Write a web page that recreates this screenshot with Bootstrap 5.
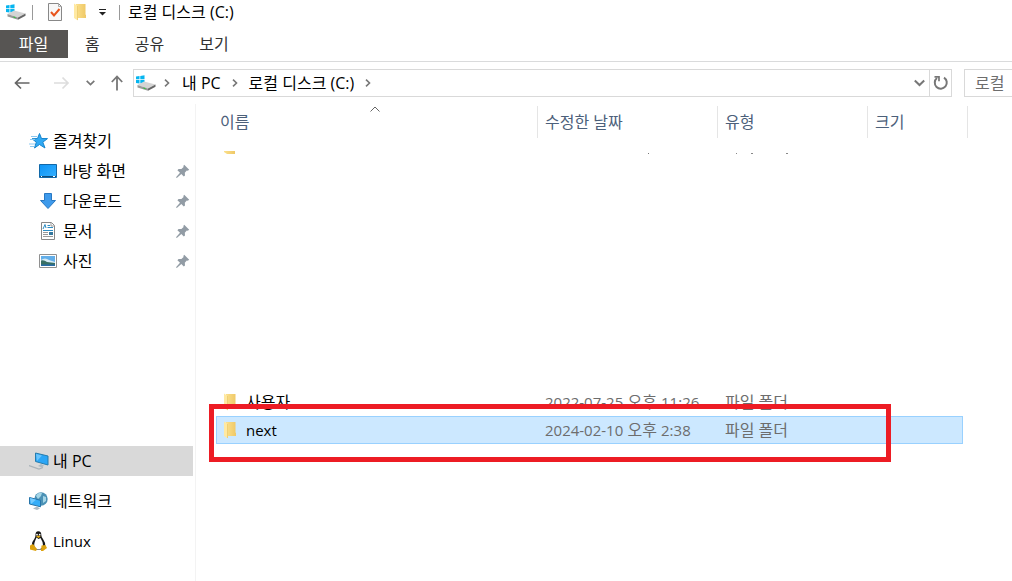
<!DOCTYPE html>
<html lang="ko">
<head>
<meta charset="utf-8">
<meta name="viewport" content="width=device-width, initial-scale=1">
<title>로컬 디스크 (C:)</title>
<link href="https://cdn.jsdelivr.net/npm/bootstrap@5.3.0/dist/css/bootstrap.min.css" rel="stylesheet">
<style>
body{font-family:"Open Sans","Noto Sans CJK KR",sans-serif;font-size:16px;line-height:20px;color:#000;background:#fff;overflow:hidden}
.ltn{font-size:15px}
svg{display:block;flex:none}
button,a{color:inherit;text-decoration:none}
.plain{border:0;background:none;padding:0}
.titlebar{height:30px;padding:0 0 6px 6px}
.rule{width:1px;height:15px;background:#999;margin:0 8px 0 12px}
.rule.tight{margin:0 15px 0 6px}
.tabs{height:32px;border-bottom:1px solid #dadbdc;color:#333}
.tabs button{height:28px;padding:0 18px 0 17px}
.tabs .tab-file{width:68px;background:#575553;color:#fff}
.address{padding:7px 0 7px 14px}
.crumbs{height:28px;border:1px solid #d9d9d9;min-width:0;padding-left:2px;margin:0 12px 0 10px}
.reload{width:22px;height:26px;border-left:1px solid #d9d9d9}
.search{width:48px;height:28px;border:1px solid #d9d9d9;border-right:0;border-radius:0;padding:0 6px 0 10px;color:#6d6d6d;outline:0}
.search::placeholder{color:#6d6d6d}
.side{width:196px;border-right:1px solid #f3f3f3;min-height:calc(100vh - 104px);padding-top:22px}
.side a{height:30px;width:193px;padding-left:29px}
.side a.sub{padding:0 3px 0 39px}
.side a.sub span{padding-left:6px}
.side a.here{background:#d9d9d9;margin-top:170px}
.side a.far{margin-top:10px}
.listing{padding:2px 44px 0 20px}
.files{width:100%;table-layout:fixed;border-collapse:separate;border-spacing:0;color:#6d6d6d}
.files th{height:32px;padding:0 0 0 7px;font-weight:400;color:#4c607a;border-right:1px solid #e5e5e5}
.files th:first-child{padding-left:4px}
.files td{height:28px;padding:0 0 0 7px;white-space:nowrap}
.files td:first-child{padding-left:8px;color:#000}
.fname{padding-left:10px}
.c-date{width:180px}.c-type{width:150px}.c-size{width:95px}.c-end{width:5px}
.picked td{background:#cce8ff;border:solid #99d1ff;border-width:1px 0}
.files .picked td:first-child{border-left-width:1px;padding-left:7px}
.picked td.last{border-right-width:1px}
.files .peek td{height:16px;vertical-align:bottom}
.files .blank td{height:234px}
.sort{top:2px;left:150px}
.marker{left:13px;right:121px;top:300px;height:58px;border:5px solid #ed1c24;pointer-events:none}
</style>
</head>
<body>
<svg width="0" height="0" class="position-absolute" aria-hidden="true">
<defs>
<linearGradient id="gold" x2="1"><stop stop-color="#fbe08c"/><stop offset="1" stop-color="#efc866"/></linearGradient>
<linearGradient id="sky" x2="1" y2="1"><stop stop-color="#0c93f5"/><stop offset="1" stop-color="#35b0ff"/></linearGradient>
<symbol id="drive" viewBox="0 0 20 16"><path d="M0 1.5 3.500 1v3.300H0zM4.300.9 8.500.2v4.100H4.300zM0 5.100h3.500v3.300L0 7.900zM4.300 5.100h4.200v4L4.300 8.500z" fill="#05b5f0"/><path d="M1.500 10 8 6.500l11.500 3-7.500 4z" fill="#d4d4d4"/><path d="m1.500 10 10.500 3.500v2.300L1.500 12.500z" fill="#999"/><path d="m12 13.500 7.500-4v2.300l-7.500 4z" fill="#666"/><path d="m7.500 13 2 .6" stroke="#31c33a" stroke-width="1.200"/></symbol>
<symbol id="folder" viewBox="0 0 12 18"><path d="M2 1h9.500v10.500l.5.500v3H2z" fill="url(#gold)"/><path d="M0 .5 3.800 3v14.500L0 15z" fill="#ffe9a2"/><path d="M3.500 3v14" stroke="#e8c565" stroke-width=".7"/></symbol>
<symbol id="pin" viewBox="0 0 14 14"><path d="m8.200.8 5 5-1.400 1-1-.3-2 2.200.2 2.700-1.200 1.200-2.500-2.600L.8 14 0 13.200 4 8.700 1.400 6.200l1.200-1.200 2.800.1 2.200-2L7.300 2z" fill="#929ca5"/></symbol>
<symbol id="chev" viewBox="0 0 6 8"><path d="m1 .7 3.500 3.300L1 7.300" fill="none" stroke="#777" stroke-width="1.600"/></symbol>
</defs>
</svg>

<header>
<div class="titlebar d-flex align-items-center">
 <svg width="20" height="16"><use href="#drive"/></svg>
 <span class="rule tight"></span>
 <button class="plain" aria-label="속성"><svg width="14" height="18" viewBox="0 0 14 18"><path d="M.5.500h10l3 3v14H.5z" fill="#f8f8f8" stroke="#888"/><path d="M10.500.500v3h3" fill="none" stroke="#aaa"/><path d="m3 9 3 3.500L11.500 6" fill="none" stroke="#e8541c" stroke-width="2"/></svg></button>
 <button class="plain ms-2 ps-1" aria-label="새 폴더"><svg width="12" height="18"><use href="#folder"/></svg></button>
 <button class="plain ms-2 ps-1" aria-label="사용자 지정"><svg width="9" height="8" viewBox="0 0 9 8"><path d="M1 1.500h7" stroke="#222"/><path d="M1 4h7L4.500 7.500z" fill="#222"/></svg></button>
 <span class="rule"></span>
 <span>로컬 디스크 (C:)</span>
</div>
<nav class="tabs d-flex" aria-label="리본">
 <button class="plain tab-file">파일</button>
 <button class="plain">홈</button>
 <button class="plain">공유</button>
 <button class="plain">보기</button>
</nav>
<div class="address d-flex align-items-center">
 <button class="plain" aria-label="뒤로"><svg width="16" height="14" viewBox="0 0 16 14"><path d="M15.500 7H1.500M7 1.500 1.500 7 7 12.500" fill="none" stroke="#666" stroke-width="1.700"/></svg></button>
 <button class="plain ms-4" aria-label="앞으로"><svg width="16" height="14" viewBox="0 0 16 14"><path d="M0 7h14M8.500 1.500 14 7l-5.500 5.500" fill="none" stroke="#ddd" stroke-width="1.700"/></svg></button>
 <button class="plain ms-3" aria-label="최근 위치"><svg width="9" height="6" viewBox="0 0 9 6"><path d="m.7.900 3.800 3.600L8.300.900" fill="none" stroke="#777" stroke-width="1.700"/></svg></button>
 <button class="plain ms-3" aria-label="위로"><svg width="12" height="16" viewBox="0 0 12 16"><path d="M6 15.500V1.500M.8 7 6 1.500 11.200 7" fill="none" stroke="#777" stroke-width="1.800"/></svg></button>
 <div class="crumbs d-flex align-items-center flex-grow-1">
  <svg width="20" height="16"><use href="#drive"/></svg>
  <svg class="ms-2" width="6" height="8"><use href="#chev"/></svg>
  <a href="#" class="ms-2 ps-1">내 PC</a>
  <svg class="ms-2 me-1" width="12" height="8"><use href="#chev"/></svg>
  <a href="#" class="ms-1">로컬 디스크 (C:)</a>
  <svg class="ms-2" width="12" height="8"><use href="#chev"/></svg>
  <button class="plain ms-auto me-1" aria-label="이전 위치"><svg width="11" height="8" viewBox="0 0 11 8"><path d="m.8 1.500 4.700 4.500 4.700-4.500" fill="none" stroke="#777" stroke-width="2"/></svg></button>
  <button class="plain reload d-flex align-items-center justify-content-center" aria-label="새로 고침"><svg width="16" height="16" viewBox="0 0 16 16"><path d="M11 2.600A6 6 0 1 1 4 3" fill="none" stroke="#777" stroke-width="2"/><path d="M1.500 1.800H6v4.500" fill="none" stroke="#777" stroke-width="1.700"/></svg></button>
 </div>
 <input class="search flex-shrink-0" type="text" placeholder="로컬" aria-label="로컬 디스크 (C:) 검색">
</div>
</header>

<div class="d-flex">
<nav class="side flex-shrink-0" aria-label="탐색 창">
 <a href="#" class="d-flex align-items-center"><svg width="20" height="18" viewBox="0 0 20 18"><path d="m10.500 1.500 2 5 6 .1-4.700 3.600 2.200 5.800-5.500-3.500L5.500 16l1.800-5.800L3 6.800l5.500-.3z" fill="#30a9f4" stroke="#1684cc"/><path d="M2 4.500h6M1 7.500h5M0 12h6M1 14.500h4" stroke="#8cc9f1"/></svg><span class="ms-1">즐겨찾기</span></a>
 <a href="#" class="sub d-flex align-items-center"><svg width="18" height="14" viewBox="0 0 18 14"><path d="M.5.500h17v13H.5z" fill="url(#sky)" stroke="#1268a8"/><path d="M1 12.500h16" stroke="#114c78"/><path d="M2 12.500h1M14 12.500h2" stroke="#fff"/></svg><span class="me-auto">바탕 화면</span><svg width="14" height="14"><use href="#pin"/></svg></a>
 <a href="#" class="sub d-flex align-items-center"><svg width="18" height="18" viewBox="0 0 18 18"><path d="M5.500 1.500h7v7h4L9 16.500 1.500 8.500h4z" fill="#3e9aeb" stroke="#2878c3"/></svg><span class="me-auto">다운로드</span><svg width="14" height="14"><use href="#pin"/></svg></a>
 <a href="#" class="sub d-flex align-items-center"><svg width="18" height="18" viewBox="0 0 18 18"><path d="M2.500.500h10l3 3v14h-13z" fill="#fff" stroke="#888"/><path d="M12 1v3h3" fill="none" stroke="#999"/><path d="M4 7 6 2.500 7 6M8.500 3.500H11M8.500 5.500H14M4 8.500h10" fill="none" stroke="#2c8dc4"/><path d="M4 10.500h5M4 12.500h5M4 14.500h10" stroke="#999"/><path d="M10 10h4v3h-4z" fill="#35789e"/></svg><span class="me-auto">문서</span><svg width="14" height="14"><use href="#pin"/></svg></a>
 <a href="#" class="sub d-flex align-items-center"><svg width="18" height="14" viewBox="0 0 18 14"><path d="M.5.500h17v13H.5z" fill="#fff" stroke="#909090"/><path d="M2 2h14v10H2z" fill="#62aee9"/><path d="M2 6q4-3 8 0l6 2v2H2z" fill="#d5eaf5"/><path d="M2 6.500q3-1 6 1.500l8 1v3H2z" fill="#386f64"/><path d="M2 10.500h14V12H2z" fill="#286da8"/></svg><span class="me-auto">사진</span><svg width="14" height="14"><use href="#pin"/></svg></a>
 <a href="#" class="here d-flex align-items-center"><svg width="20" height="18" viewBox="0 0 20 18"><path d="m6.500 1 12.500 3v9L6.500 9.500z" fill="#2ba6f6" stroke="#267cad"/><path d="m7 2 6 1.500L8 9z" fill="#6bc5fc"/><path d="m9 14 3-2 3 1.500-2 2z" fill="#aebbc4"/><path d="m0 13.500 10 3.500 4-1.500" fill="none" stroke="#a9b2b8" stroke-width="1.200"/></svg><span class="ms-1">내 PC</span></a>
 <a href="#" class="far d-flex align-items-center"><svg width="20" height="18" viewBox="0 0 20 18"><circle cx="12" cy="7" r="6.700" fill="#4b91b5"/><path d="M7 4q2-4 6-3l-1 3-3 3zM14 4l3 1v4l-3 2z" fill="#a5d5e6"/><path d="m.5 5.500 11 2.800v6.500L.5 12z" fill="#35adf8" stroke="#2775aa"/><path d="m1 6 6 1.800L2 12z" fill="#75cbff"/><path d="m4 16.500 4-2 3 2-3 1.500z" fill="#aebbc4"/></svg><span class="ms-1">네트워크</span></a>
 <a href="#" class="far d-flex align-items-center"><svg width="20" height="20" viewBox="0 0 20 20"><path d="M6.500 4Q6.300.2 9.300.2 12.500.2 12.300 4q0 2 1.700 4 2.500 3.500 2.200 7l-3 3.500H6L2.800 14q.2-3.500 2.500-6 1.300-2 1.200-4z" fill="#161616"/><path d="M7.500 6.500 9.500 8l2-1q1 2 2 4 1.500 6-2.500 7H7.500q-3.500-2-1.800-7z" fill="#fff"/><circle cx="8" cy="3.700" r=".9" fill="#fff"/><circle cx="10.700" cy="3.700" r=".9" fill="#fff"/><path d="m7 5.500 2.300-1 2.500 1L9.500 7z" fill="#e7ae12"/><path d="m1 14.500 3-1.500 4 5-1 2-6-1.500zM12.500 14.500l4-.5 1.500 3-4 3h-2z" fill="#dda20d"/></svg><span class="ms-1 ltn">Linux</span></a>
</nav>

<main class="listing flex-grow-1 position-relative">
 <svg class="sort position-absolute ms-4" width="10" height="6" viewBox="0 0 10 6"><path d="M.5 5.500 5 1l4.500 4.500" fill="none" stroke="#666"/></svg>
 <table class="files">
  <colgroup><col><col class="c-date"><col class="c-type"><col class="c-size"><col class="c-end"></colgroup>
  <thead><tr><th>이름</th><th>수정한 날짜</th><th>유형</th><th colspan="2">크기</th></tr></thead>
  <tbody>
   <!-- only the lower edge of this row shows under the header -->
   <tr class="peek"><td><svg width="12" height="3" viewBox="0 0 12 3"><path d="M0 0h11v3H3L0 1z" fill="url(#gold)"/></svg></td><td><svg width="110" height="1"><path d="M103 .5h1" stroke="#777"/></svg></td><td><svg width="66" height="1"><path d="M11 .5h1M26 .5h2M61 .5h2" stroke="#888"/></svg></td><td></td><td></td></tr>
   <tr class="blank"><td colspan="5"></td></tr>
   <tr><td><div class="d-flex align-items-center"><svg width="12" height="18"><use href="#folder"/></svg><span class="fname">사용자</span></div></td><td><span class="ltn">2022-07-25</span> 오후 <span class="ltn">11:26</span></td><td>파일 폴더</td><td></td><td></td></tr>
   <tr class="picked"><td><div class="d-flex align-items-center"><svg width="12" height="18"><use href="#folder"/></svg><span class="fname ltn">next</span></div></td><td><span class="ltn">2024-02-10</span> 오후 <span class="ltn">2:38</span></td><td>파일 폴더</td><td class="last"></td><td class="bg-white border-0"></td></tr>
  </tbody>
 </table>
 <div class="marker position-absolute"></div>
</main>
</div>
<script src="https://cdn.jsdelivr.net/npm/bootstrap@5.3.0/dist/js/bootstrap.bundle.min.js"></script>
</body>
</html>
